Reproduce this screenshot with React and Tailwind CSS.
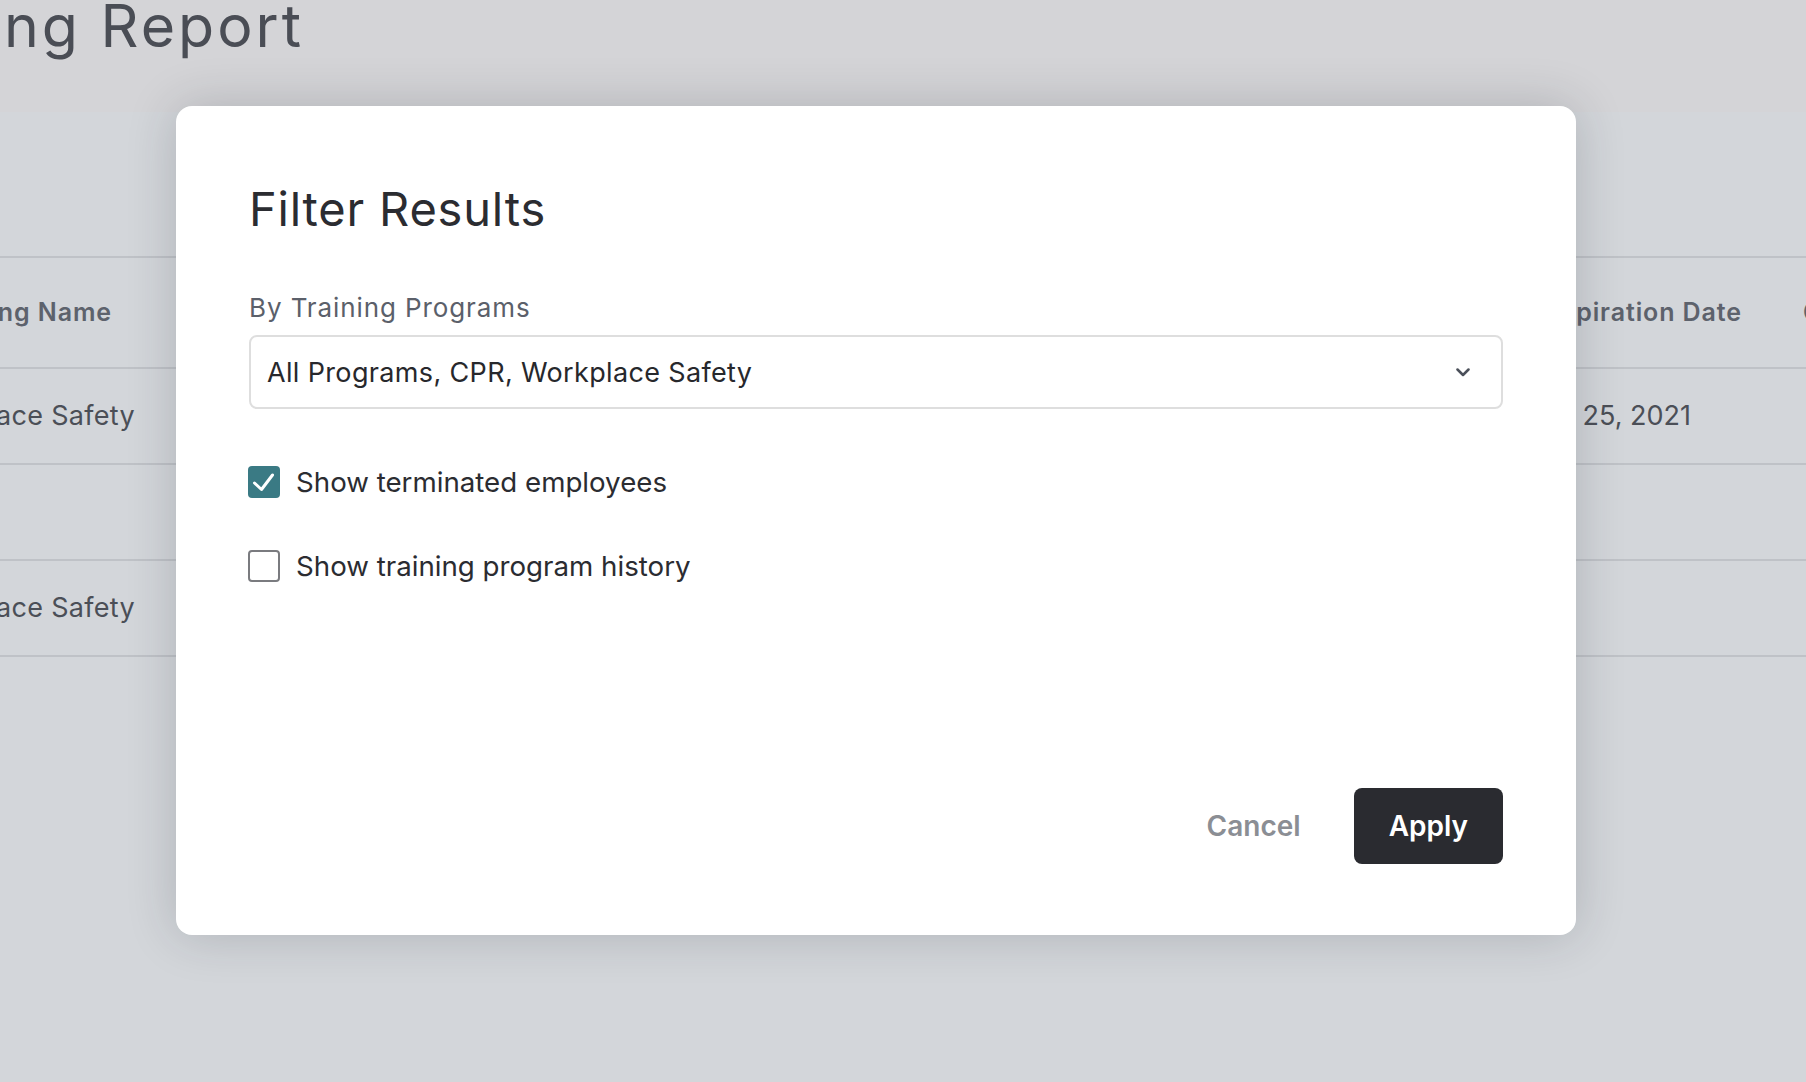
import React from "react";

function Checkbox({ checked }) {
  if (checked) {
    return (
      <span className="flex h-[32px] w-[32px] shrink-0 items-center justify-center rounded-[4px] bg-[#3a7a84]">
        <svg width="32" height="32" viewBox="0 0 32 32" fill="none">
          <path d="M6.5 17L13.5 23.5L24.5 9" stroke="#ffffff" strokeWidth="3" strokeLinecap="round" strokeLinejoin="round" />
        </svg>
      </span>
    );
  }
  return <span className="block h-[32px] w-[32px] shrink-0 rounded-[4px] border-2 border-[#7a7b7f] bg-white" />;
}

export default function App() {
  return (
    <div className="relative h-[1082px] w-[1806px] overflow-hidden bg-[#d3d6da] font-['Inter',sans-serif]">
      {/* background page */}
      <div className="flex h-[112px] flex-col bg-[#d4d4d7]">
        <div className="-mt-[10px] flex w-[304px] justify-end overflow-hidden">
          <h1 className="whitespace-nowrap text-[59px] font-normal leading-[72px] tracking-[3px] text-[#4a4d55]">Training Report</h1>
        </div>
      </div>
      <div className="h-[144px]" />
      <div className="border-t-2 border-[#bfc2c7]">
        <div className="flex h-[111px] items-center border-b-2 border-[#bfc2c7] text-[25px] font-semibold tracking-[0.9px] text-[#5d626c]">
          <div className="flex w-[112px] shrink-0 justify-end overflow-hidden">
            <span className="whitespace-nowrap">Training Name</span>
          </div>
          <div className="flex-1" />
          <div className="flex w-[220px] shrink-0 justify-end overflow-hidden">
            <span className="whitespace-nowrap">Expiration Date</span>
          </div>
          <div className="w-[61px] shrink-0" />
          <div className="w-[3px] shrink-0 overflow-visible">
            <span className="whitespace-nowrap">Certificate</span>
          </div>
        </div>
        <div className="flex h-[96px] items-center border-b-2 border-[#bfc2c7] text-[27px] text-[#4b4f57]">
          <div className="flex w-[135px] shrink-0 justify-end overflow-hidden">
            <span className="whitespace-nowrap tracking-[0.3px]">Workplace Safety</span>
          </div>
          <div className="flex-1" />
          <div className="flex w-[220px] shrink-0 justify-end overflow-hidden">
            <span className="whitespace-nowrap">Mar 25, 2021</span>
          </div>
          <div className="w-[115px] shrink-0" />
        </div>
        <div className="h-[96px] border-b-2 border-[#bfc2c7]" />
        <div className="flex h-[96px] items-center border-b-2 border-[#bfc2c7] text-[27px] text-[#4b4f57]">
          <div className="flex w-[135px] shrink-0 justify-end overflow-hidden">
            <span className="whitespace-nowrap tracking-[0.3px]">Workplace Safety</span>
          </div>
        </div>
      </div>

      {/* overlay with modal */}
      <div className="absolute inset-0 pl-[176px] pt-[106px]">
        <div className="flex h-[829px] w-[1400px] flex-col rounded-[16px] bg-white px-[73px] pb-[71px] pt-[75px] shadow-[0_0_50px_rgba(30,35,45,0.2)]">
          <h2 className="text-[47px] font-normal leading-[56px] tracking-[0.8px] text-[#2b2c31]">Filter Results</h2>

          <label className="mt-[56px] block text-[26px] leading-[30px] tracking-[0.9px] text-[#5b606a]">By Training Programs</label>
          <div className="mt-[12px] flex h-[74px] items-center justify-between rounded-[8px] border-2 border-[#dedede] pl-[16px] pr-[31px] pt-[2px]">
            <span className="text-[27px] leading-[32px] tracking-[0.35px] text-[#27282c]">All Programs, CPR, Workplace Safety</span>
            <svg width="14" height="9" viewBox="0 0 14 9" fill="none" className="-mt-[1px]">
              <path d="M1.5 1.5L7 7L12.5 1.5" stroke="#4b505a" strokeWidth="2.5" strokeLinecap="round" strokeLinejoin="round" />
            </svg>
          </div>

          <div className="-ml-[1px] mt-[57px] flex h-[32px] items-center gap-[16px]">
            <Checkbox checked />
            <span className="text-[27.7px] leading-[34px] text-[#2b2c31]">Show terminated employees</span>
          </div>
          <div className="-ml-[1px] mt-[52px] flex h-[32px] items-center gap-[16px]">
            <Checkbox checked={false} />
            <span className="text-[27.7px] leading-[34px] text-[#2b2c31]">Show training program history</span>
          </div>

          <div className="mt-auto flex items-center justify-end gap-[53px]">
            <button className="text-[28px] font-semibold leading-[34px] text-[#8b8e94]">Cancel</button>
            <button className="flex h-[76px] items-center rounded-[8px] bg-[#2a2b30] px-[35px] text-[28px] font-semibold leading-[34px] text-white">
              Apply
            </button>
          </div>
        </div>
      </div>
    </div>
  );
}
